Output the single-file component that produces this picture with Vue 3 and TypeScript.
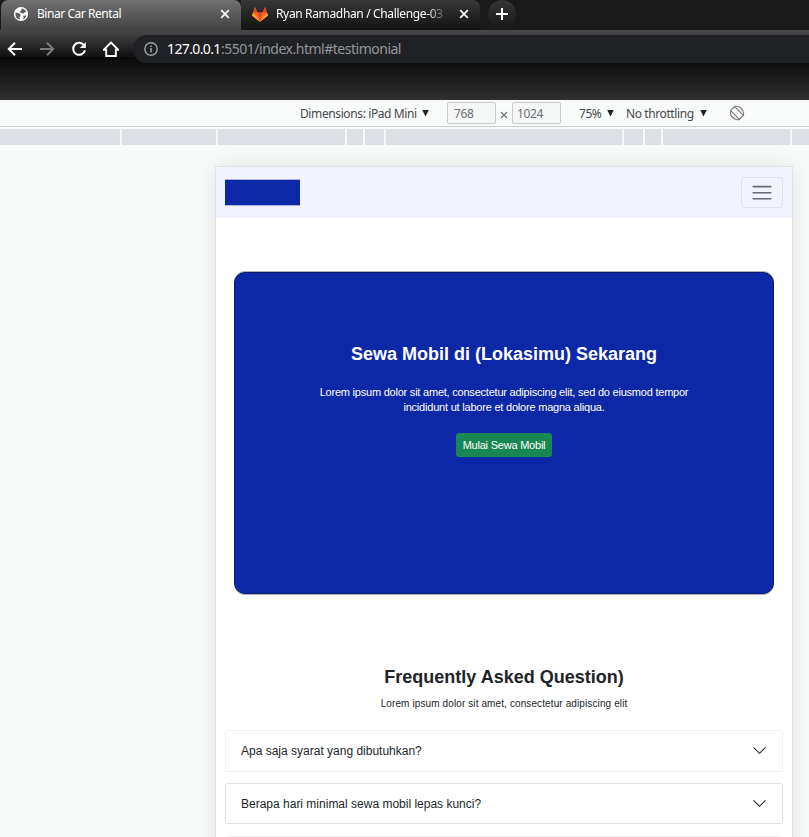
<script setup lang="ts">
interface Faq {
  id: number
  question: string
}

const faqs: Faq[] = [
  { id: 1, question: 'Apa saja syarat yang dibutuhkan?' },
  { id: 2, question: 'Berapa hari minimal sewa mobil lepas kunci?' },
  { id: 3, question: '' },
]

const breakpoints: number[] = [120, 94, 127, 16, 19, 236, 19, 16, 127, 17]
</script>

<template>
  <div class="window">
    <header class="chrome">
      <div class="tabs">
        <div class="tab active">
          <svg class="favicon" width="16" height="16" viewBox="0 0 16 16">
            <circle cx="8" cy="8" r="7.1" fill="#fff" />
            <path d="M2.6 6.6 6.2 7.2 7.6 8.6 7.4 10.2 6.3 11.2 7 13.6C3.8 13.2 2 10.5 2.6 6.6ZM8.4 2.4C10.6 2.6 12.6 3.8 13.4 6L11 6.4 10.4 7.8 7.6 6.8 6.8 5.2 8.6 4.2ZM10 9.8 13.4 9.4C12.8 11.6 11.4 13 9.4 13.6L10.8 11.4Z" fill="#5c5c5c" />
          </svg>
          <span class="tab-title first">Binar Car Rental</span>
          <svg class="close" width="10" height="10" viewBox="0 0 10 10"><path d="M1.2 1.2 8.8 8.8M8.8 1.2 1.2 8.8" stroke="#fff" stroke-width="1.7" /></svg>
        </div>
        <div class="tab idle">
          <svg class="fox" width="16" height="15" viewBox="0 0 16 15">
            <path d="M0 8.6 3 0 5.4 5.5H10.6L13 0 16 8.6 8 14.7Z" fill="#fc6d26" />
            <path d="M5.4 5.5H10.6L8 14.7ZM3 0 5.4 5.5H1.2ZM13 0 14.8 5.5H10.6Z" fill="#e24329" />
            <path d="M1.2 5.5 0 8.6 8 14.7ZM14.8 5.5 16 8.6 8 14.7Z" fill="#fca326" />
          </svg>
          <span class="tab-title second">Ryan Ramadhan / Challenge-03 ·</span>
          <svg class="close" width="10" height="10" viewBox="0 0 10 10"><path d="M1.2 1.2 8.8 8.8M8.8 1.2 1.2 8.8" stroke="#fff" stroke-width="1.7" /></svg>
        </div>
        <div class="new-tab">
          <svg width="12" height="12" viewBox="0 0 12 12"><path d="M6 0V12M0 6H12" stroke="#fff" stroke-width="2" /></svg>
        </div>
      </div>
      <div class="toolbar">
        <svg class="nav" width="16" height="16" viewBox="0 0 16 16"><path d="M15 8H2M8 1.8 1.8 8 8 14.2" fill="none" stroke="#fff" stroke-width="2" /></svg>
        <svg class="nav" width="16" height="16" viewBox="0 0 16 16"><path d="M1 8H14M8 1.8 14.2 8 8 14.2" fill="none" stroke="#7b7b7b" stroke-width="2" /></svg>
        <svg class="nav" width="16" height="16" viewBox="0 0 16 16"><path d="M13.2 4.5A6 6 0 1 0 14 9.2" fill="none" stroke="#fff" stroke-width="2" /><path d="M14.8 1V7H8.8Z" fill="#fff" /></svg>
        <svg class="nav" width="16" height="16" viewBox="0 0 16 16"><path d="M.8 8.7 8 1.5 15.2 8.7H12.8V15H3.2V8.7Z" fill="none" stroke="#fff" stroke-width="1.9" /></svg>
        <div class="address">
          <svg class="info" width="14" height="14" viewBox="0 0 14 14"><circle cx="7" cy="7" r="6.2" fill="none" stroke="#9aa0a6" stroke-width="1.4" /><path d="M7 6V10.5M7 3.4V4.9" stroke="#9aa0a6" stroke-width="1.6" /></svg>
          <span class="host">127.0.0.1</span><span class="path">:5501/index.html#testimonial</span>
        </div>
      </div>
      <div class="bookmarks"></div>
    </header>

    <div class="device-bar">
      <span class="label dimensions">Dimensions: iPad Mini</span>
      <i class="caret c1"></i>
      <span class="size w">768</span>
      <svg class="times" width="8" height="8" viewBox="0 0 8 8"><path d="M1 1 7 7M7 1 1 7" stroke="#70757a" stroke-width="1.2" /></svg>
      <span class="size h">1024</span>
      <span class="label zoom">75%</span>
      <i class="caret c2"></i>
      <span class="label throttle">No throttling</span>
      <i class="caret c3"></i>
      <svg class="rotate" width="16" height="16" viewBox="0 0 16 16" fill="none" stroke="#777" stroke-width="1.1">
        <path d="M1.6 5.6 5.6 1.6 14.4 10.4 10.4 14.4ZM5.6 1.6C9.6.2 15.8 4.4 14.4 10.4M1.6 5.6C.2 11.6 6.4 15.8 10.4 14.4" />
      </svg>
    </div>
    <div class="ruler">
      <div v-for="(w, i) in breakpoints" :key="i" class="segment" :style="{ width: w + 'px' }"></div>
    </div>

    <main class="stage">
      <div class="device">
        <nav class="navbar">
          <div class="brand"></div>
          <button class="toggler" aria-label="Menu">
            <svg width="24" height="24" viewBox="0 0 30 30"><path d="M4 7h22M4 14.6h22M4 22.2h22" stroke="#696a73" stroke-width="2" stroke-linecap="round" /></svg>
          </button>
        </nav>
        <section class="hero">
          <h1>Sewa Mobil di (Lokasimu) Sekarang</h1>
          <p>
            <span class="line-one">Lorem ipsum dolor sit amet, consectetur adipiscing elit, sed do eiusmod tempor</span><br />
            <span class="line-two">incididunt ut labore et dolore magna aliqua.</span>
          </p>
          <button class="cta">Mulai Sewa Mobil</button>
        </section>
        <section class="faq">
          <h2>Frequently Asked Question)</h2>
          <p>Lorem ipsum dolor sit amet, consectetur adipiscing elit</p>
          <div v-for="f in faqs" :key="f.id" class="item" :class="{ faint: f.id !== 2 }">
            <span>{{ f.question }}</span>
            <svg width="15" height="15" viewBox="0 0 16 16"><path d="M1.6 4.6 8 11 14.4 4.6" fill="none" stroke="#212529" stroke-width="1.15" /></svg>
          </div>
        </section>
      </div>
    </main>
  </div>
</template>

<style>
html,
body {
  overflow: hidden;
}
</style>

<style scoped>
.window,
.window * {
  box-sizing: border-box;
}
.window {
  width: 809px;
  height: 837px;
  overflow: hidden;
  display: flex;
  flex-direction: column;
  background: #f8faf9;
  font-family: 'Noto Sans', sans-serif;
  white-space: nowrap;
}
.chrome {
  flex: none;
  height: 100px;
  background: #191919;
}
.tabs {
  display: flex;
  height: 30px;
}
.tab {
  display: flex;
  align-items: center;
  height: 30px;
  padding-bottom: 2px;
}
.active {
  width: 240px;
  margin-left: 1px;
  padding-left: 12px;
  border-radius: 7px 7px 0 0;
  background: linear-gradient(#707070, #434343);
}
.idle {
  width: 239px;
  padding-left: 11px;
  border-radius: 0 7px 0 7px;
  background: linear-gradient(#383838, #121212);
}
.tab-title {
  font-size: 12px;
  line-height: 16px;
  color: #fff;
  overflow: hidden;
}
.first {
  width: 182px;
  margin-left: 8px;
  letter-spacing: -0.45px;
}
.second {
  width: 172px;
  margin: 0 10px 0 8px;
  letter-spacing: -0.35px;
  -webkit-mask-image: linear-gradient(90deg, #000 88%, transparent);
  mask-image: linear-gradient(90deg, #000 88%, transparent);
}
.close {
  margin-left: 1px;
}
.new-tab {
  display: flex;
  align-items: center;
  justify-content: center;
  width: 28px;
  height: 28px;
  margin-left: 8px;
  border-radius: 50%;
  background: linear-gradient(#363636, #191919);
}
.toolbar {
  display: flex;
  align-items: center;
  gap: 16px;
  height: 34px;
  padding: 4px 0 0 7px;
  background: linear-gradient(#484848 0, #101010 27px, #050505 28px, #0c0c0c 29px, #101010);
}
.address {
  display: flex;
  align-items: center;
  flex: 1;
  height: 28px;
  margin-left: -2px;
  padding: 0 0 1px 11px;
  border-radius: 14px 0 0 14px;
  background: #202124;
  font-size: 14px;
}
.host {
  width: 54px;
  margin-left: 9px;
  color: #fff;
  letter-spacing: -0.62px;
}
.path {
  color: #92969b;
  letter-spacing: -0.49px;
}
.bookmarks {
  height: 36px;
  background: linear-gradient(#101010, #303030);
}
.device-bar {
  flex: none;
  display: flex;
  align-items: center;
  height: 27px;
  padding-left: 300px;
  border-bottom: 1px solid #cacdd3;
  background: #f9fbfa;
  font-size: 12px;
  line-height: 16px;
  color: #45484c;
}
.label {
  padding-top: 1px;
}
.dimensions {
  width: 122px;
  letter-spacing: -0.39px;
}
.caret {
  width: 7px;
  height: 7px;
  background: #202124;
  clip-path: polygon(0 0, 100% 0, 50% 100%);
}
.size {
  width: 49px;
  height: 22px;
  padding: 3px 0 0 6px;
  border: 1px solid #c9cbce;
  border-radius: 2px;
  background: #f5f6f6;
  color: #6d7074;
  letter-spacing: -0.4px;
}
.w {
  margin-left: 18px;
}
.h {
  padding-left: 4px;
}
.times {
  margin: 4px 4px 0;
}
.zoom {
  width: 27px;
  margin-left: 18px;
  letter-spacing: -0.45px;
}
.throttle {
  width: 73px;
  margin-left: 12px;
  letter-spacing: -0.4px;
}
.c2,
.c3 {
  margin-left: 1px;
}
.rotate {
  margin-left: 22px;
}
.ruler {
  flex: none;
  display: flex;
  gap: 2px;
  height: 18px;
  padding-top: 2px;
}
.segment {
  flex: none;
  background: #dee0e5;
}
.stage {
  flex: none;
  height: 692px;
  padding: 22px 0 0 216px;
}
.device {
  width: 576px;
  height: 700px;
  background: #fff;
  box-shadow: 0 0 0 1px #e2e4e4, 0 0 20px rgba(0, 0, 0, 0.1);
}
.navbar {
  display: flex;
  align-items: center;
  justify-content: space-between;
  height: 51px;
  padding: 0 9px;
  background: #f1f3ff;
}
.brand {
  width: 75px;
  height: 25px;
  background: #0d28a6;
  box-shadow: 0 1px #a9b4de, 0 -1px #a9b4de;
}
.toggler {
  display: flex;
  align-items: center;
  justify-content: center;
  width: 42px;
  height: 31px;
  padding: 0;
  border: 1px solid #e1e2ef;
  border-radius: 3px;
  background: none;
}
.hero {
  width: 540px;
  height: 322px;
  margin: 54px 0 0 18px;
  padding-top: 70px;
  border: 1px solid #091c74;
  border-radius: 11px;
  background: #0d28a6;
  box-shadow: 0 1px #b3b3b6, 0 -1px #b3b3b6;
  color: #fff;
  text-align: center;
  font-family: 'Liberation Sans', Arial, sans-serif;
}
h1,
h2 {
  margin: 0;
  font-size: 18px;
  line-height: 22px;
  font-weight: 700;
}
.hero p {
  margin: 20px 0 0;
  font-size: 11px;
  line-height: 15px;
}
.line-one {
  letter-spacing: -0.22px;
}
.line-two {
  letter-spacing: -0.21px;
}
.cta {
  display: inline-flex;
  align-items: center;
  justify-content: center;
  width: 96px;
  height: 24px;
  margin-top: 18px;
  padding: 0;
  border: 0;
  border-radius: 3px;
  background: #198754;
  color: #fff;
  font-family: inherit;
  font-size: 11px;
  letter-spacing: -0.22px;
}
.faq {
  padding: 72px 9px 0;
  color: #212529;
  text-align: center;
  font-family: 'Liberation Sans', Arial, sans-serif;
}
.faq p {
  margin: 8px 0 19px;
  font-size: 10px;
  line-height: 15px;
  letter-spacing: 0.11px;
}
.item {
  display: flex;
  align-items: center;
  justify-content: space-between;
  height: 41px;
  margin-bottom: 12px;
  padding: 0 15px;
  border: 1px solid #e0e1e2;
  border-radius: 3px;
  font-size: 12px;
}
.faint {
  height: 42px;
  margin-bottom: 11px;
  padding-bottom: 1px;
  border-color: #efeff0;
}
</style>
